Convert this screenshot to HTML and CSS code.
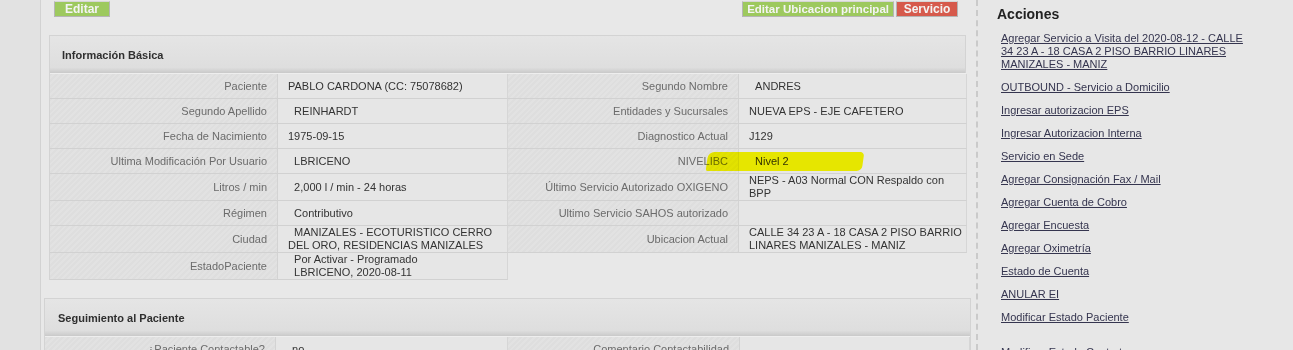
FILE: index.html
```html
<!DOCTYPE html>
<html lang="es">
<head>
    <meta charset="UTF-8">
    <title>Paciente</title>
    <link rel="stylesheet" href="styles.css">
</head>
<body>
<div class="page">
    <div class="gutter"></div>

    <main class="main">
        <div class="toolbar">
            <a class="btn btn-green" href="#">Editar</a>
            <div class="toolbar-right">
                <a class="btn btn-green" href="#">Editar Ubicacion principal</a>
                <a class="btn btn-red" href="#">Servicio</a>
            </div>
        </div>

        <section class="box box-basic">
            <div class="box-head">Información Básica</div>
            <div class="grid">
                <div class="lbl">Paciente</div>
                <div class="val"><span>PABLO CARDONA (CC: 75078682)</span></div>
                <div class="lbl">Segundo Nombre</div>
                <div class="val"><span>&nbsp;&nbsp;ANDRES</span></div>

                <div class="lbl">Segundo Apellido</div>
                <div class="val"><span>&nbsp;&nbsp;REINHARDT</span></div>
                <div class="lbl">Entidades y Sucursales</div>
                <div class="val"><span>NUEVA EPS - EJE CAFETERO</span></div>

                <div class="lbl">Fecha de Nacimiento</div>
                <div class="val"><span>1975-09-15</span></div>
                <div class="lbl">Diagnostico Actual</div>
                <div class="val"><span>J129</span></div>

                <div class="lbl">Ultima Modificación Por Usuario</div>
                <div class="val"><span>&nbsp;&nbsp;LBRICENO</span></div>
                <div class="lbl">NIVELIBC</div>
                <div class="val"><span>&nbsp;&nbsp;Nivel 2</span></div>

                <div class="lbl">Litros / min</div>
                <div class="val"><span>&nbsp;&nbsp;2,000 l / min - 24 horas</span></div>
                <div class="lbl">Último Servicio Autorizado OXIGENO</div>
                <div class="val"><span>NEPS - A03 Normal CON Respaldo con BPP</span></div>

                <div class="lbl">Régimen</div>
                <div class="val"><span>&nbsp;&nbsp;Contributivo</span></div>
                <div class="lbl">Ultimo Servicio SAHOS autorizado</div>
                <div class="val"></div>

                <div class="lbl">Ciudad</div>
                <div class="val"><span>&nbsp;&nbsp;MANIZALES - ECOTURISTICO CERRO DEL ORO, RESIDENCIAS MANIZALES</span></div>
                <div class="lbl">Ubicacion Actual</div>
                <div class="val"><span>CALLE 34 23 A - 18 CASA 2 PISO BARRIO LINARES MANIZALES - MANIZ</span></div>

                <div class="lbl">EstadoPaciente</div>
                <div class="val"><span>&nbsp;&nbsp;Por Activar - Programado<br>&nbsp;&nbsp;LBRICENO, 2020-08-11</span></div>
            </div>
            <span class="marker"></span>
        </section>

        <section class="box box-follow">
            <div class="box-head">Seguimiento al Paciente</div>
            <div class="grid">
                <div class="lbl">¿Paciente Contactable?</div>
                <div class="val"><span>&nbsp;&nbsp;no</span></div>
                <div class="lbl">Comentario Contactabilidad</div>
                <div class="val"></div>
            </div>
        </section>
    </main>

    <aside class="sidebar">
        <h3>Acciones</h3>
        <ul class="actions">
            <li><a href="#">Agregar Servicio a Visita del 2020-08-12 - CALLE 34 23 A - 18 CASA 2 PISO BARRIO LINARES MANIZALES - MANIZ</a></li>
            <li><a href="#">OUTBOUND - Servicio a Domicilio</a></li>
            <li><a href="#">Ingresar autorizacion EPS</a></li>
            <li><a href="#">Ingresar Autorizacion Interna</a></li>
            <li><a href="#">Servicio en Sede</a></li>
            <li><a href="#">Agregar Consignación Fax / Mail</a></li>
            <li><a href="#">Agregar Cuenta de Cobro</a></li>
            <li><a href="#">Agregar Encuesta</a></li>
            <li><a href="#">Agregar Oximetría</a></li>
            <li><a href="#">Estado de Cuenta</a></li>
            <li><a href="#">ANULAR EI</a></li>
            <li><a href="#">Modificar Estado Paciente</a></li>
            <li class="spaced"><a href="#">Modificar Estado Contrato</a></li>
        </ul>
    </aside>
</div>
</body>
</html>
```

FILE: styles.css
```css
/* base */
* { box-sizing: border-box; }

html, body {
    margin: 0;
    height: 350px;
    overflow: hidden;
}

body {
    font-family: "Liberation Sans", Arial, sans-serif;
    font-size: 11px;
    color: #333;
    background: #e7e7e7;
}

.page {
    display: flex;
    height: 350px;
}

/* columna gris de la izquierda */
.gutter {
    width: 41px;
    flex: none;
    background: #e2e2e2;
    border-right: 1px solid #d2d2d2;
}

.main {
    width: 935px;
    flex: none;
    padding-top: 1px;
    background: #e8e8e8;
}

/* botones */
.toolbar {
    display: flex;
    justify-content: space-between;
    padding: 0 18px 0 13px;
}
.toolbar-right { display: flex; gap: 2px; }

.btn {
    display: block;
    height: 16px;
    padding: 0 6px;
    line-height: 14px;
    font-size: 12px;
    font-weight: bold;
    color: #f4f4f4;
    white-space: nowrap;
    text-decoration: none;
    text-align: center;
    border: 1px solid #b5b5b5;
    border-top-color: #d6d6d6;
}
.btn-green { background: #9dc95e; min-width: 56px; }
.btn-red { background: #d65a4c; min-width: 62px; }
.toolbar-right .btn-green { font-size: 11.5px; padding: 0 4px; }

/* cajas */
.box {
    position: relative;
    border-top: 1px solid #d3d3d3;
    border-left: 1px solid #d3d3d3;
}
.box-basic { margin: 18px 10px 0 8px; }
.box-follow { margin: 18px 5px 0 3px; border-right: 1px solid #d3d3d3; }

.box-head {
    height: 37px;
    padding: 13px 12px 0;
    font-weight: bold;
    color: #2f2f2f;
    background: linear-gradient(to bottom, #e5e5e5 0%, #dedede 85%, #d2d2d2 94%, #c9c9c9 100%);
    border-right: 1px solid #d3d3d3;
}
.box-follow .box-head { padding-left: 13px; border-right: none; }

.grid {
    display: grid;
    grid-template-columns: 228px 230px 231px 228px;
    border-top: 1px solid #eeeeee;
}
.box-follow .grid { grid-template-columns: 231px 232px 232px 1fr; }

.lbl, .val {
    display: flex;
    align-items: center;
    min-height: 25px;
    padding: 0 10px;
    line-height: 13px;
    border-bottom: 1px solid #d1d1d1;
    border-right: 1px solid #d3d3d3;
}

.lbl {
    justify-content: flex-end;
    text-align: right;
    color: #6b6b6b;
    background: repeating-linear-gradient(135deg, #dedede 0 2px, #e2e2e2 2px 4px);
}

.val {
    padding-right: 4px;
    color: #333;
    background: #e6e6e6;
    border-right-color: #d6d6d6;
}

/* marcador amarillo */
.marker {
    position: absolute;
    left: 657px;
    top: 116px;
    width: 156px;
    height: 19px;
    background: #ecec00;
    mix-blend-mode: darken;
    border-radius: 6px 4px 5px 2px;
    transform: skewX(-8deg);
    pointer-events: none;
}

/* barra lateral */
.sidebar {
    flex: 1;
    padding: 6px 0 0 19px;
    border-left: 2px dashed #cacaca;
    background: #e7e7e7;
}

.sidebar h3 {
    margin: 0 0 9px;
    font-size: 14px;
    line-height: 17px;
    color: #222;
}

.actions {
    list-style: none;
    margin: 0;
    padding: 0 0 0 4px;
    width: 250px;
}
.actions li {
    line-height: 13px;
    margin-bottom: 10px;
}
.actions li.spaced { margin-top: 22px; }
.actions a {
    color: #35354f;
    text-decoration: underline;
}
```
